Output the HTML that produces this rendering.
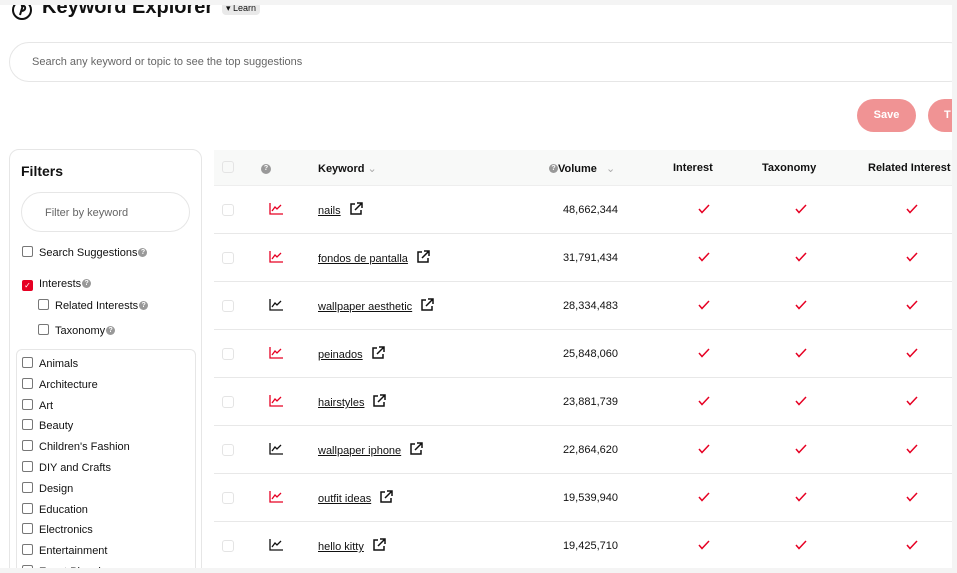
<!DOCTYPE html>
<html><head><meta charset="utf-8"><style>
*{box-sizing:border-box;margin:0;padding:0}
body{width:957px;height:573px;overflow:hidden;background:#f4f4f4;font-family:"Liberation Sans",sans-serif;color:#111;position:relative}
.page{position:absolute;left:0;top:5px;width:952px;height:563px;background:#fff;overflow:hidden}
.abs{position:absolute}
.title{left:42px;top:-9px;font-size:20px;font-weight:bold;white-space:nowrap}
.learn{left:222px;top:-3px;background:#e9e9e9;border-radius:4px;font-size:9px;padding:1px 4px}
.search{left:9px;top:37px;width:960px;height:40px;border:1px solid #e6e6e6;border-radius:20px;font-size:11px;color:#666;padding:13px 0 0 22px}
.btn{top:94px;height:33px;border-radius:17px;background:#f09394;color:#fff;font-weight:bold;font-size:11px;text-align:center;line-height:33px}
.filters{left:9px;top:144px;width:193px;height:440px;border:1px solid #e6e6e6;border-radius:10px}
.cb{display:inline-block;width:11px;height:11px;border:1px solid #777;border-radius:2px;vertical-align:-1px;margin-right:6px;background:#fff}
.q{display:inline-block;width:9px;height:9px;border-radius:50%;background:#999;color:#fff;font-size:7px;line-height:9px;text-align:center;font-weight:bold;vertical-align:middle;margin-left:1px;position:relative;top:-1px}
.fl{font-size:11px;white-space:nowrap}
.thead{left:214px;top:145px;width:740px;height:36px;background:#f8f9f8;border-bottom:1px solid #eee}
.th{top:157px;font-size:11px;font-weight:bold;white-space:nowrap}
.row{left:214px;width:740px;height:48px;border-bottom:1px solid #e8e8e8}
.rc{width:12px;height:12px;border:1px solid #e4e4e4;border-radius:3px}
.kw{font-size:11px;white-space:nowrap;line-height:14px}
.kw u{text-decoration:underline}
.vol{font-size:11px;width:120px;text-align:right}
</style></head><body>
<div class="page">
<svg class="abs" style="left:11px;top:-6px" width="22" height="22" viewBox="0 0 22 22"><circle cx="11" cy="11" r="9" fill="none" stroke="#111" stroke-width="2"/><path d="M9 16 L12 6 M10 7 Q15 6 14 10 Q13 12 10 12" fill="none" stroke="#111" stroke-width="2"/></svg>
<div class="abs title">Keyword Explorer</div>
<div class="abs learn">▾ Learn</div>
<div class="abs search">Search any keyword or topic to see the top suggestions</div>
<div class="abs btn" style="left:857px;width:59px">Save</div>
<div class="abs btn" style="left:928px;width:40px;text-align:left;padding-left:16px">T</div>

<div class="abs filters"></div>
<div class="abs" style="left:21px;top:158px;font-size:14px;font-weight:bold">Filters</div>
<div class="abs" style="left:21px;top:187px;width:169px;height:40px;border:1px solid #e6e6e6;border-radius:20px;font-size:11px;color:#666;padding:14px 0 0 23px">Filter by keyword</div>
<div class="abs fl" style="left:22px;top:241px"><span class="cb"></span>Search Suggestions<span class="q">?</span></div>
<div class="abs fl" style="left:22px;top:273px"><span class="cb" style="background:#e60023;border-color:#e60023;color:#fff;font-size:8px;line-height:9px;text-align:center">✓</span>Interests<span class="q">?</span></div>
<div class="abs fl" style="left:38px;top:294px"><span class="cb"></span>Related Interests<span class="q">?</span></div>
<div class="abs fl" style="left:38px;top:319px"><span class="cb"></span>Taxonomy<span class="q">?</span></div>
<div class="abs" style="left:16px;top:344px;width:180px;height:240px;border:1px solid #e6e6e6;border-radius:6px"></div>
<div class="abs fl" style="left:22px;top:349px;line-height:20.8px">
<div><span class="cb"></span>Animals</div><div><span class="cb"></span>Architecture</div><div><span class="cb"></span>Art</div><div><span class="cb"></span>Beauty</div><div><span class="cb"></span>Children's Fashion</div><div><span class="cb"></span>DIY and Crafts</div><div><span class="cb"></span>Design</div><div><span class="cb"></span>Education</div><div><span class="cb"></span>Electronics</div><div><span class="cb"></span>Entertainment</div><div><span class="cb"></span>Event Planning</div></div>

<div class="abs thead"></div>
<div class="abs rc" style="left:222px;top:156px"></div>
<div class="abs" style="left:260px;top:155px"><span class="q" style="width:10px;height:10px;top:0">?</span></div>
<div class="abs th" style="left:318px">Keyword <span style="color:#aaa;font-weight:normal">⌄</span></div>
<div class="abs th" style="left:548px"><span class="q">?</span>Volume <span style="color:#aaa;font-weight:normal;margin-left:6px">⌄</span></div>
<div class="abs th" style="left:673px">Interest</div>
<div class="abs th" style="left:762px">Taxonomy</div>
<div class="abs th" style="left:868px">Related Interest</div>

<div id="rows"></div>
</div>
<script>
var d=[["nails","48,662,344",1],["fondos de pantalla","31,791,434",1],["wallpaper aesthetic","28,334,483",0],["peinados","25,848,060",1],["hairstyles","23,881,739",1],["wallpaper iphone","22,864,620",0],["outfit ideas","19,539,940",1],["hello kitty","19,425,710",0]];
var h="";
d.forEach(function(r,i){var y=181+i*48,c=y+24;var col=r[2]?"#e60023":"#111";
h+='<div class="abs row" style="top:'+y+'px"></div>';
h+='<div class="abs rc" style="left:222px;top:'+(c-6)+'px"></div>';
h+='<svg class="abs" style="left:269px;top:'+(c-7)+'px" width="14" height="12" viewBox="0 0 14 12"><path d="M1 0V11H14" fill="none" stroke="'+col+'" stroke-width="1.3"/><path d="M3 8L6 4L8 6L12 2" fill="none" stroke="'+col+'" stroke-width="1.3"/></svg>';
h+='<div class="abs kw" style="left:318px;top:'+(c-8)+'px"><u>'+r[0]+'</u><svg style="margin-left:8px;vertical-align:-2px" width="14" height="14" viewBox="0 0 14 14"><path d="M6 2H2V12H12V8M8 1H13V6M13 1L6 8" fill="none" stroke="#111" stroke-width="1.5"/></svg></div>';
h+='<div class="abs vol" style="left:498px;top:'+(c-6)+'px">'+r[1]+'</div>';
[704,801,912].forEach(function(x){h+='<svg class="abs" style="left:'+(x-6)+'px;top:'+(c-6)+'px" width="12" height="10" viewBox="0 0 12 10"><path d="M1 5L4 8.5L11 1" fill="none" stroke="#e60023" stroke-width="1.5"/></svg>';});
});
document.getElementById("rows").innerHTML=h;
</script>
</body></html>
